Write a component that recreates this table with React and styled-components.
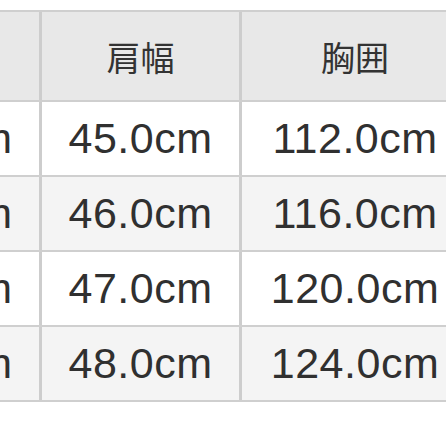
import React from "react";
import styled, { createGlobalStyle } from "styled-components";

const Global = createGlobalStyle`
  html, body { margin: 0; padding: 0; background: #ffffff; }
  body { font-family: "Liberation Sans", "Noto Sans CJK JP", sans-serif; }
`;

const Viewport = styled.div`
  width: 446px;
  height: 446px;
  overflow: hidden;
  padding-top: 10px;
  box-sizing: border-box;
`;

const Table = styled.div`
  display: flex;
  flex-direction: column;
  width: 626px;
  margin-left: -158px;
  border-top: 2px solid #cfcfcf;
  border-bottom: 2px solid #cfcfcf;
`;

const Row = styled.div`
  display: grid;
  grid-template-columns: 200px 200px 226px;
  height: ${(p) => (p.$head ? "88px" : "73px")};
  background: ${(p) => (p.$head ? "#e8e8e8" : p.$alt ? "#f4f4f4" : "#ffffff")};
  & + & {
    border-top: ${(p) => (p.$afterHead ? "0" : "2px solid #cfcfcf")};
  }
`;

const Cell = styled.div`
  display: flex;
  align-items: center;
  justify-content: center;
  border-right: ${(p) => (p.$last ? "0" : "3px solid #cdcdcd")};
  color: #303030;
  font-size: ${(p) => (p.$head ? "34px" : "43px")};
  letter-spacing: ${(p) => (p.$head ? "0" : "0.5px")};
  white-space: nowrap;
  overflow: hidden;
`;

const HeadText = styled.span`
  font-family: "Noto Sans CJK JP", sans-serif;
  font-weight: 400;
  color: #333333;
`;

const rows = [
  ["66.0cm", "45.0cm", "112.0cm"],
  ["68.0cm", "46.0cm", "116.0cm"],
  ["70.0cm", "47.0cm", "120.0cm"],
  ["72.0cm", "48.0cm", "124.0cm"],
];

export default function App() {
  return (
    <>
      <Global />
      <Viewport>
        <Table>
          <Row $head>
            <Cell $head><HeadText>着丈</HeadText></Cell>
            <Cell $head><HeadText>肩幅</HeadText></Cell>
            <Cell $head $last><HeadText>胸囲</HeadText></Cell>
          </Row>
          {rows.map((r, i) => (
            <Row key={i} $alt={i % 2 === 1} $afterHead={i === 0}>
              <Cell>{r[0]}</Cell>
              <Cell>{r[1]}</Cell>
              <Cell $last>{r[2]}</Cell>
            </Row>
          ))}
        </Table>
      </Viewport>
    </>
  );
}
